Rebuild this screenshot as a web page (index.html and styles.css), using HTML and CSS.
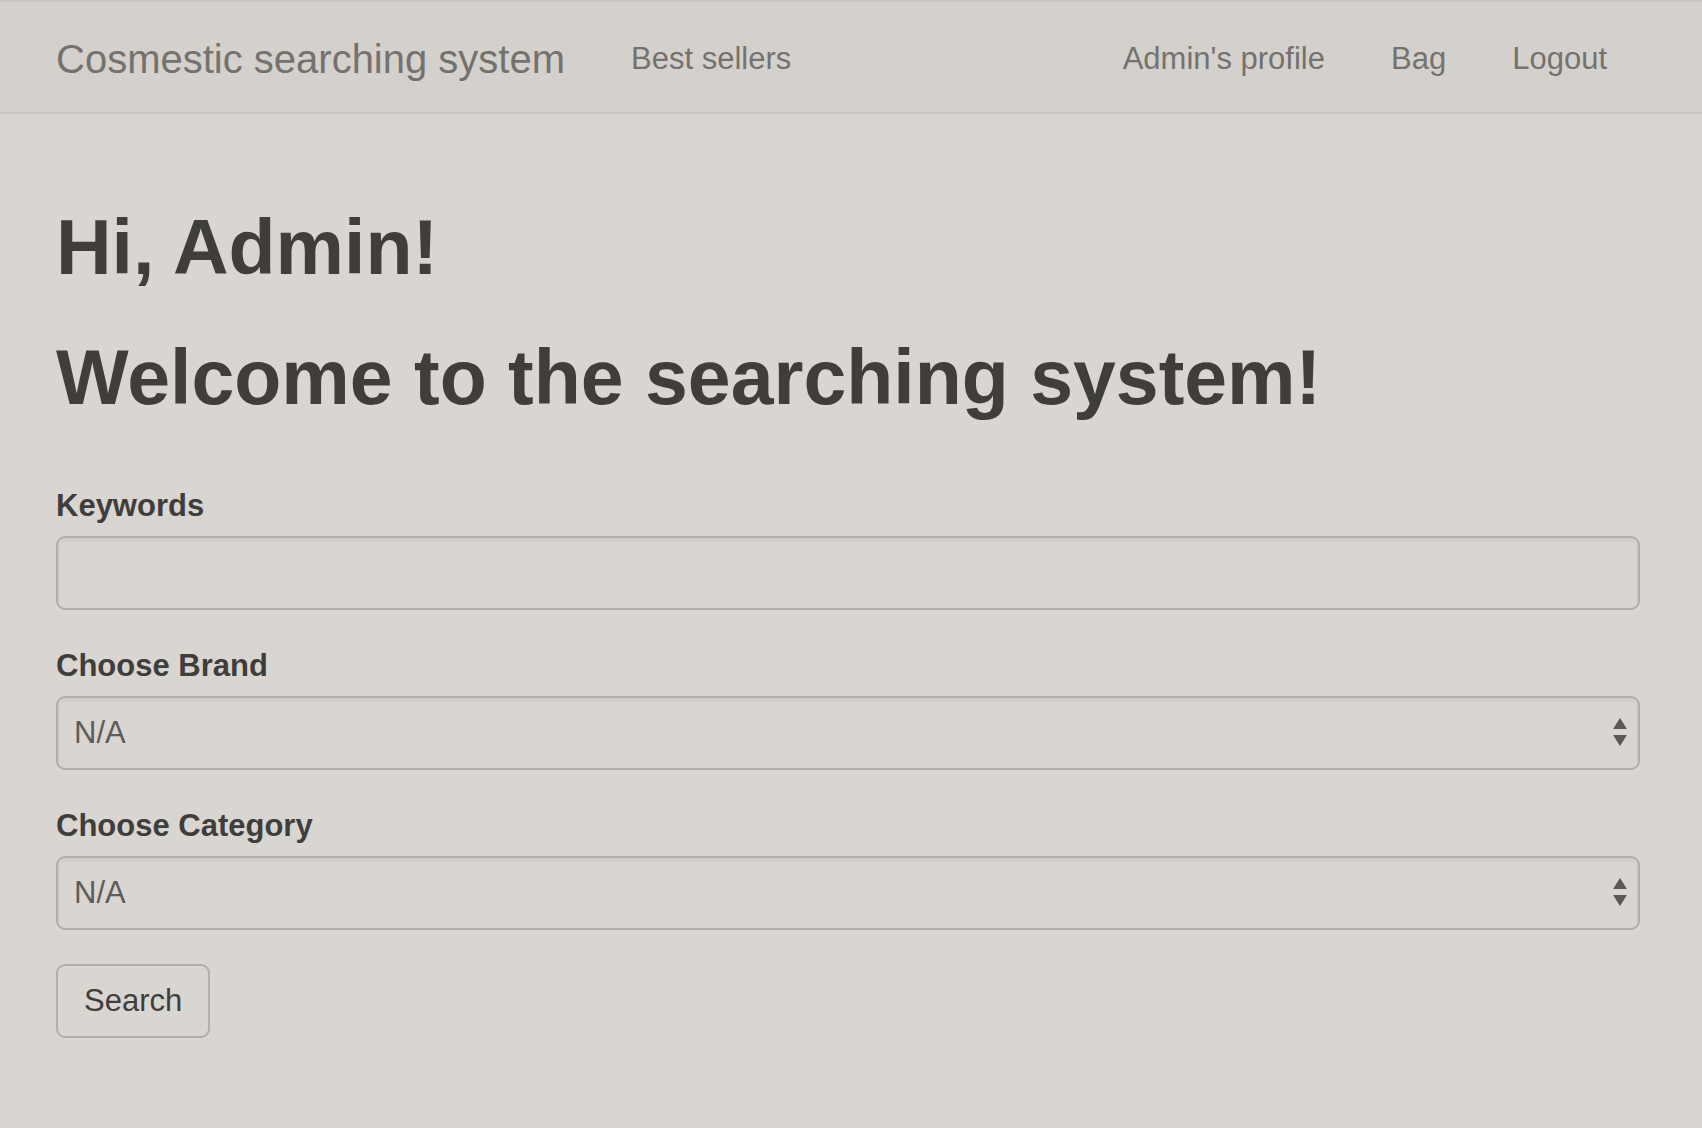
FILE: index.html
```html
<!DOCTYPE html>
<html lang="en">
<head>
  <meta charset="utf-8">
  <meta name="viewport" content="width=device-width, initial-scale=1">
  <title>Cosmestic searching system</title>
  <link rel="stylesheet" href="styles.css">
</head>
<body>
  <nav class="navbar">
    <a class="navbar-brand" href="#">Cosmestic searching system</a>
    <a class="nav-link" href="#">Best sellers</a>
    <div class="navbar-right">
      <a class="nav-link" href="#">Admin's profile</a>
      <a class="nav-link" href="#">Bag</a>
      <a class="nav-link" href="#">Logout</a>
    </div>
  </nav>
  <main class="container">
    <h1 class="heading">Hi, Admin!</h1>
    <h1 class="heading">Welcome to the searching system!</h1>
    <form class="search-form">
      <div class="form-group">
        <label class="form-label" for="keywords">Keywords</label>
        <input class="form-control" type="text" id="keywords" name="keywords">
      </div>
      <div class="form-group">
        <label class="form-label" for="brand">Choose Brand</label>
        <div class="select-wrap">
          <select class="form-control" id="brand" name="brand"><option>N/A</option></select>
          <svg class="select-arrows" viewBox="0 0 14 28" aria-hidden="true"><path d="M7 0L14 11H0ZM0 17H14L7 28Z"/></svg>
        </div>
      </div>
      <div class="form-group">
        <label class="form-label" for="category">Choose Category</label>
        <div class="select-wrap">
          <select class="form-control" id="category" name="category"><option>N/A</option></select>
          <svg class="select-arrows" viewBox="0 0 14 28" aria-hidden="true"><path d="M7 0L14 11H0ZM0 17H14L7 28Z"/></svg>
        </div>
      </div>
      <button class="btn" type="button">Search</button>
    </form>
  </main>
</body>
</html>
```
FILE: styles.css
```css
*,
*::before,
*::after {
  box-sizing: border-box;
}

body {
  margin: 0;
  background: #d8d5d0;
  color: #403e3b;
  font: 31px/44px "Liberation Sans", Arial, sans-serif;
}

.navbar {
  display: flex;
  align-items: center;
  height: 114px;
  padding: 4px 62px 0 23px;
  background: #d4d1cc;
  border-top: 2px solid #c8c4be;
  border-bottom: 2px solid #c8c4be;
}

.navbar-brand,
.nav-link {
  padding: 0 33px;
  color: #75726e;
  text-decoration: none;
  white-space: nowrap;
}

.navbar-brand {
  font-size: 40px;
}

.navbar-right {
  display: flex;
  margin-left: auto;
}

.container {
  padding: 90px 62px 0 56px;
  background: #d9d6d1;
}

.heading {
  margin: 0 0 44px;
  font-size: 77px;
  font-weight: 700;
  line-height: 86px;
}

.search-form {
  padding-top: 20px;
}

.form-group {
  margin-bottom: 34px;
}

.form-label {
  display: block;
  margin-bottom: 8px;
  font-weight: 700;
}

.form-control {
  display: block;
  width: 100%;
  height: 74px;
  padding: 0 16px;
  border: 2px solid #b2afa9;
  border-radius: 9px;
  background: transparent;
  box-shadow: inset 0 2px 4px rgba(0, 0, 0, 0.06);
  color: #5e5b57;
  font: inherit;
  appearance: none;
}

.select-wrap {
  position: relative;
}

.select-arrows {
  position: absolute;
  top: 22px;
  right: 13px;
  width: 14px;
  height: 28px;
  fill: #5b5955;
  pointer-events: none;
}

.btn {
  display: block;
  height: 74px;
  padding: 0 26px;
  border: 2px solid #b2afa9;
  border-radius: 9px;
  background: transparent;
  color: #403e3b;
  font: inherit;
}
```
